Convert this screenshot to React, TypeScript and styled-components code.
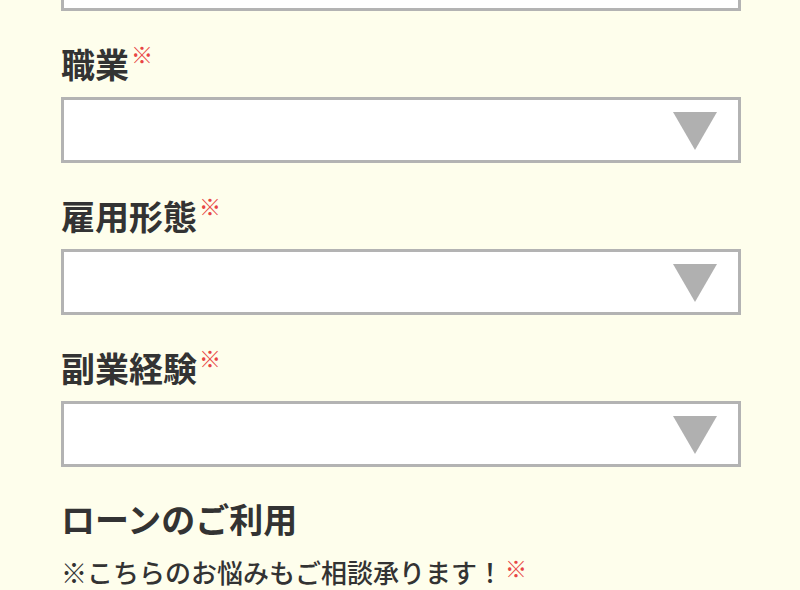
import React from 'react';
import styled, { createGlobalStyle } from 'styled-components';

const GlobalStyle = createGlobalStyle`
  html, body {
    margin: 0;
    padding: 0;
    background: #fefeec;
  }
  body {
    font-family: "Noto Sans CJK JP", "Noto Sans", sans-serif;
    color: #333;
    overflow: hidden;
  }
`;

const Form = styled.form`
  display: flex;
  flex-direction: column;
  padding: 0 59px 0 61px;
  margin-top: -55px;
`;

const Field = styled.div`
  display: flex;
  flex-direction: column;
  & + & {
    margin-top: 27px;
  }
`;

const Label = styled.label`
  font-size: 34px;
  font-weight: 700;
  line-height: 51px;
  margin-bottom: 8px;
`;

const Required = styled.span`
  color: #e84545;
  font-size: 22px;
  font-weight: 500;
  vertical-align: top;
  line-height: 30px;
  margin-left: 2px;
`;

const SelectBox = styled.div`
  position: relative;
  box-sizing: border-box;
  height: 66px;
  background: #fff;
  border: 3px solid #b3b3b3;
`;

const Arrow = styled.span`
  position: absolute;
  right: 21px;
  top: 12px;
  width: 44px;
  height: 38px;
  background: #b0b0b0;
  clip-path: polygon(0 0, 100% 0, 50% 100%);
`;

const Heading = styled.h3`
  margin: 26px 0 0;
  font-size: 34px;
  font-weight: 700;
  line-height: 51px;
`;

const Note = styled.p`
  margin: 8px 0 0;
  font-size: 26px;
  font-weight: 500;
  line-height: 39px;
  white-space: nowrap;
`;

const fields = ['', '職業', '雇用形態', '副業経験'];

const Select: React.FC = () => (
  <SelectBox>
    <Arrow />
  </SelectBox>
);

export default function App() {
  return (
    <>
      <GlobalStyle />
      <Form>
        {fields.map((name, i) => (
          <Field key={i}>
            {name && (
              <Label>
                {name}
                <Required>※</Required>
              </Label>
            )}
            {i === 0 ? <SelectBox /> : <Select />}
          </Field>
        ))}
        <Heading>ローンのご利用</Heading>
        <Note>
          ※こちらのお悩みもご相談承ります！<Required>※</Required>
        </Note>
      </Form>
    </>
  );
}
